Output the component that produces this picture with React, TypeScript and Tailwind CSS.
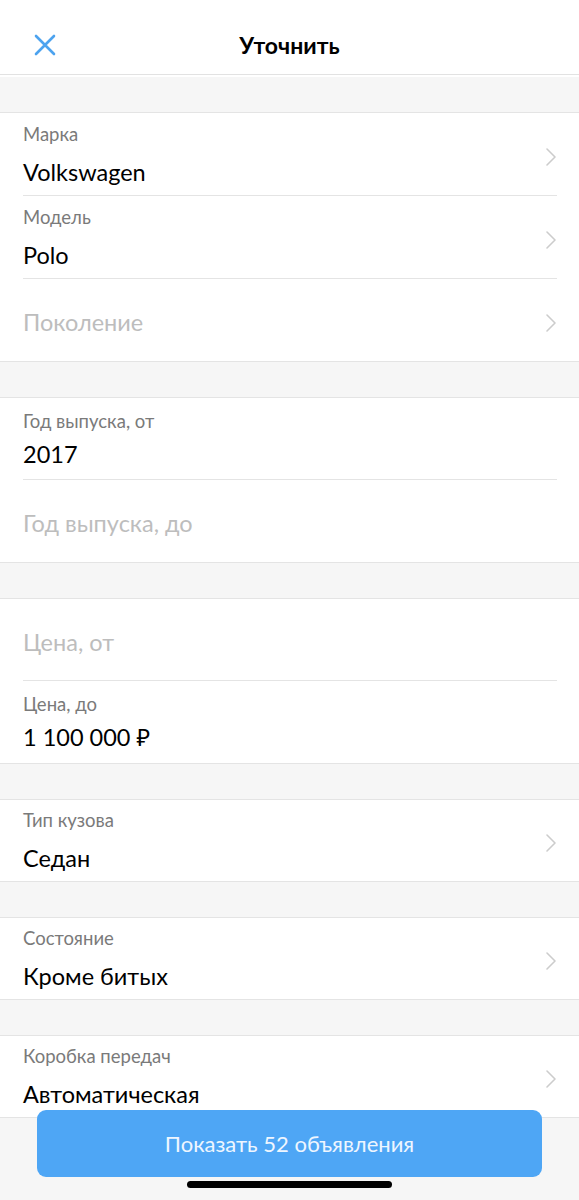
import React from "react";

type Field = {
  label: string;
  value?: string;
  chevron?: boolean;
  tight?: boolean;
  h?: string;
};

const sections: Field[][] = [
  [
    { label: "Марка", value: "Volkswagen", chevron: true, h: "h-[83px]" },
    { label: "Модель", value: "Polo", chevron: true, h: "h-[83px]" },
    { label: "Поколение", chevron: true },
  ],
  [
    { label: "Год выпуска, от", value: "2017", tight: true },
    { label: "Год выпуска, до" },
  ],
  [
    { label: "Цена, от" },
    { label: "Цена, до", value: "1 100 000 ₽", tight: true },
  ],
  [{ label: "Тип кузова", value: "Седан", chevron: true, h: "h-[81px]" }],
  [{ label: "Состояние", value: "Кроме битых", chevron: true, h: "h-[81px]" }],
  [{ label: "Коробка передач", value: "Автоматическая", chevron: true, h: "h-[81px]" }],
];

function Chevron() {
  return (
    <svg width="12" height="20" viewBox="0 0 12 20" className="shrink-0">
      <path d="M2 2 L10 10 L2 18" fill="none" stroke="#cccccc" strokeWidth="1.6" strokeLinecap="round" strokeLinejoin="round" />
    </svg>
  );
}

function Row({ field, last }: { field: Field; last: boolean }) {
  return (
    <div className={`relative flex items-center pl-[23px] pr-[22px] ${field.h ?? "h-[82px]"}`}>
      <div className="flex-1">
        {field.value ? (
          <div className="flex flex-col">
            <span className="text-[18.5px] leading-[22px] text-[#7a7a7a]">{field.label}</span>
            <span className={`${field.tight ? "mt-[8px]" : "mt-[13px]"} text-[23.5px] leading-[28px] text-black`}>
              {field.value}
            </span>
          </div>
        ) : (
          <span className="mt-[3px] block text-[23.5px] leading-[28px] text-[#bdbdbd]">{field.label}</span>
        )}
      </div>
      {field.chevron && (
        <div className="mt-[5px]">
          <Chevron />
        </div>
      )}
      {!last && <div className="absolute bottom-0 left-[23px] right-[22px] h-px bg-[#e4e4e4]" />}
    </div>
  );
}

export default function App() {
  return (
    <div
      className="relative h-[1200px] w-full overflow-hidden bg-[#f6f6f6]"
      style={{ fontFamily: "Lato, 'Open Sans', 'Noto Sans', sans-serif" }}
    >
      <header className="flex h-[75px] items-center justify-center border-b border-[#e2e2e2] bg-white">
        <button className="absolute left-[34px] top-[34px]">
          <svg width="22" height="22" viewBox="0 0 22 22">
            <path d="M2 2 L20 20 M20 2 L2 20" stroke="#4da3ef" strokeWidth="2.6" strokeLinecap="round" />
          </svg>
        </button>
        <h1 className="mt-[16px] text-[23px] font-bold text-black">Уточнить</h1>
      </header>
      <div className="h-[2px] bg-white" />

      <div className="flex flex-col gap-[35px] pt-[35px]">
        {sections.map((fields, i) => (
          <section key={i} className="border-y border-[#e4e4e4] bg-white">
            {fields.map((f, j) => (
              <Row key={j} field={f} last={j === fields.length - 1} />
            ))}
          </section>
        ))}
      </div>

      <button className="absolute left-[37px] right-[37px] top-[1110px] flex h-[67px] items-center justify-center rounded-[9px] bg-[#4ea6f5] text-[22px] text-[#eef6ff]">
        Показать 52 объявления
      </button>
      <div className="absolute left-[187px] top-[1181px] h-[7px] w-[205px] rounded-full bg-black" />
    </div>
  );
}
